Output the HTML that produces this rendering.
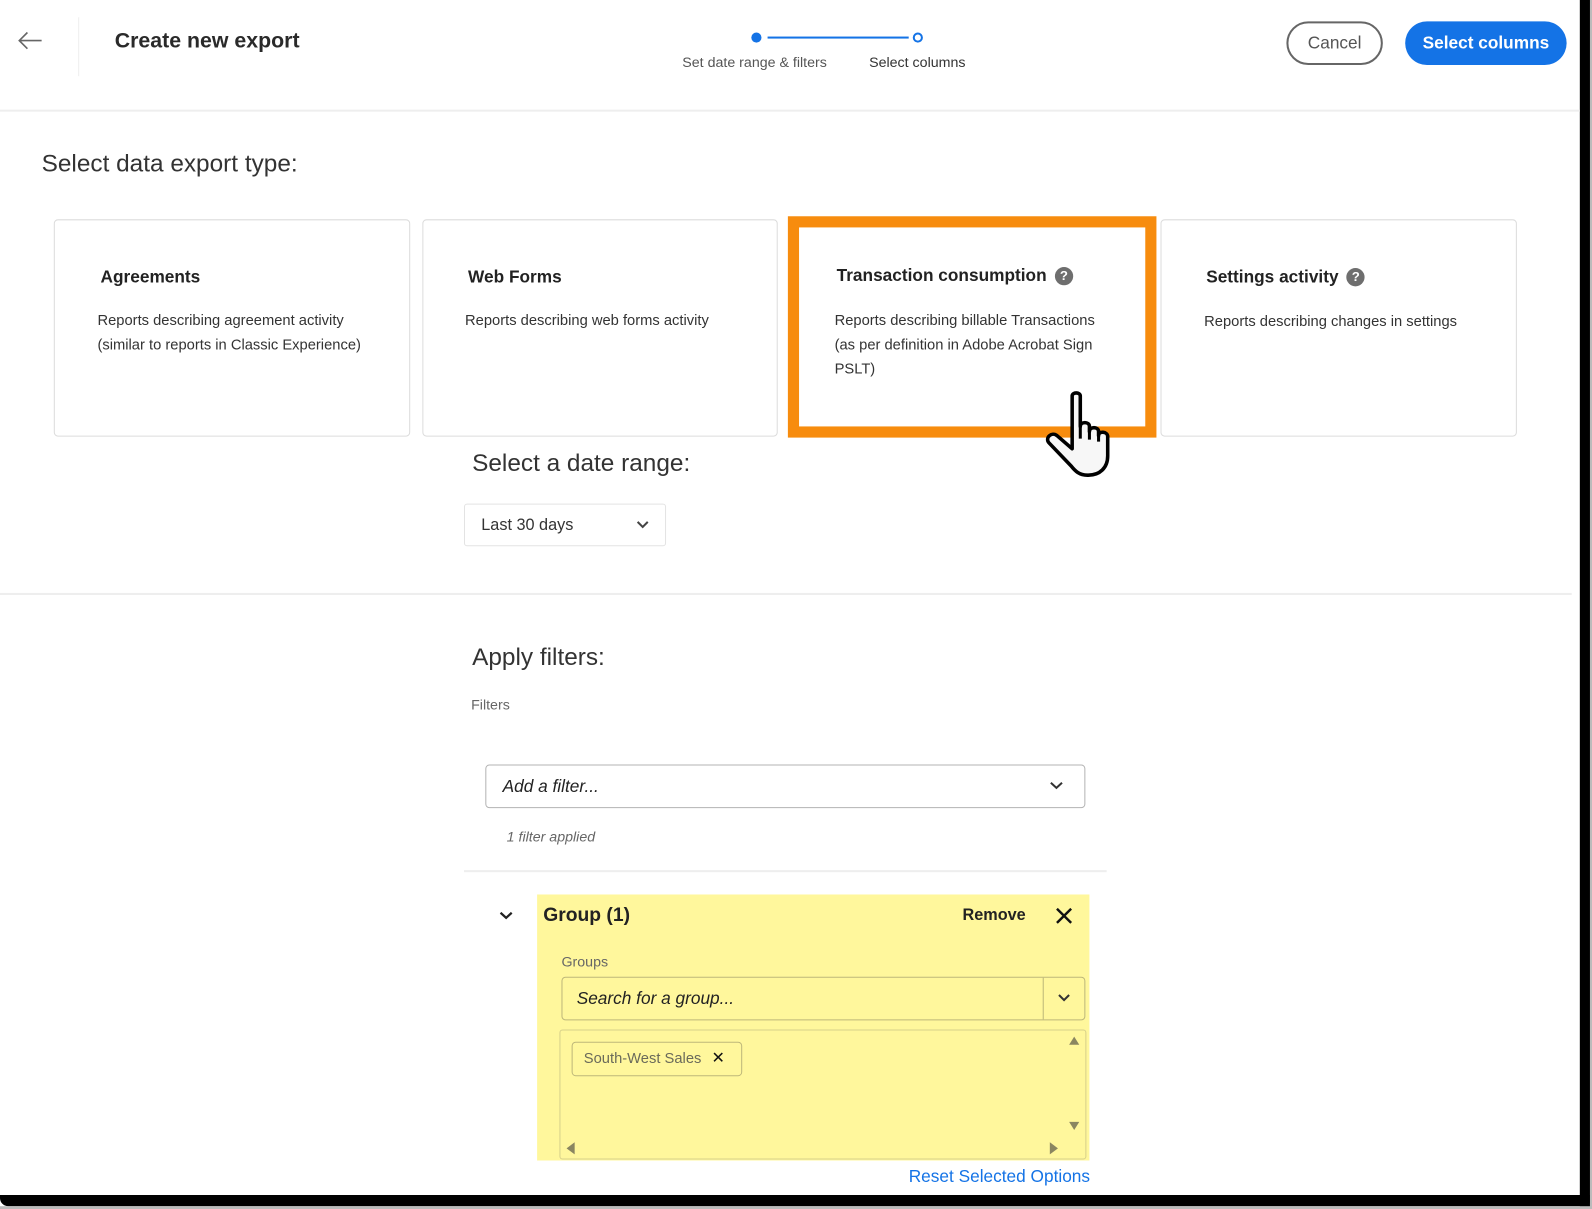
<!DOCTYPE html>
<html><head><meta charset="utf-8"><style>
*{box-sizing:border-box;margin:0;padding:0}
html,body{width:1592px;height:1209px;overflow:hidden;background:#fff;font-family:"Liberation Sans",sans-serif;color:#2c2c2c}
#w{position:absolute;left:0;top:0;width:1568px;height:1191px;transform:scale(1.01531);transform-origin:0 0}
.a{position:absolute}
.card{position:absolute;top:216px;height:214px;border:1px solid #dcdcdc;border-radius:4px;background:#fff}
.card h3{position:absolute;font-size:17px;font-weight:bold;color:#222}
.card p{position:absolute;font-size:14.5px;line-height:24px;color:#333}
.q{display:inline-block;width:18px;height:18px;border-radius:50%;background:#6e6e6e;color:#fff;font-size:13px;text-align:center;line-height:18px;margin-left:8px;vertical-align:1px}
</style></head><body><div id="w">
<!-- frame shadow -->
<div class="a" style="left:1556px;top:0;width:10px;height:1190px;background:#000"></div>
<div class="a" style="left:0;top:1177px;width:1566px;height:11px;background:#000;border-radius:0 0 4px 8px"></div>
<div class="a" style="left:1566px;top:0;width:2px;height:1191px;background:#bbb"></div>
<div class="a" style="left:0;top:1188px;width:1568px;height:3px;background:#bbb"></div>

<!-- header -->
<svg class="a" style="left:16px;top:30px" width="28" height="20"><path d="M25 10H3M11 2L3 10L11 18" stroke="#666" stroke-width="1.6" fill="none"/></svg>
<div class="a" style="left:77px;top:17px;width:1px;height:58px;background:#eee"></div>
<div class="a" style="left:113px;top:29px;font-size:21px;font-weight:bold;color:#2a2a2a">Create new export</div>
<div class="a" style="left:740px;top:32px;width:10px;height:10px;border-radius:50%;background:#1473e6"></div>
<div class="a" style="left:756px;top:36px;width:139px;height:2px;background:#1473e6"></div>
<div class="a" style="left:899px;top:32px;width:10px;height:10px;border-radius:50%;border:2px solid #1473e6"></div>
<div class="a" style="left:672px;top:53px;font-size:14px;color:#555">Set date range &amp; filters</div>
<div class="a" style="left:856px;top:53px;font-size:14px;color:#333">Select columns</div>
<div class="a" style="left:1267px;top:21px;width:95px;height:43px;border:2px solid #666;border-radius:22px;font-size:17px;color:#555;text-align:center;line-height:39px">Cancel</div>
<div class="a" style="left:1384px;top:21px;width:159px;height:43px;background:#1473e6;border-radius:22px;font-size:17px;font-weight:bold;color:#fff;text-align:center;line-height:43px">Select columns</div>
<div class="a" style="left:0;top:108px;width:1556px;height:2px;background:#eee"></div>

<div class="a" style="left:41px;top:148px;font-size:24px;color:#333">Select data export type:</div>

<div class="card" style="left:53px;width:351px"><h3 style="left:45px;top:46px">Agreements</h3><p style="left:42px;top:87px">Reports describing agreement activity<br>(similar to reports in Classic Experience)</p></div>
<div class="card" style="left:416px;width:350px"><h3 style="left:44px;top:46px">Web Forms</h3><p style="left:41px;top:87px">Reports describing web forms activity</p></div>
<div class="a" style="left:776px;top:213px;width:363px;height:218px;border:11px solid #f78c0e;background:#fff"></div>
<div class="a" style="left:824px;top:262px;font-size:17px;font-weight:bold;color:#222">Transaction consumption<span class="q">?</span></div>
<div class="a" style="left:822px;top:304px;font-size:14.5px;line-height:24px;color:#333">Reports describing billable Transactions<br>(as per definition in Adobe Acrobat Sign<br>PSLT)</div>
<div class="card" style="left:1143px;width:351px"><h3 style="left:44px;top:46px">Settings activity<span class="q">?</span></h3><p style="left:42px;top:88px">Reports describing changes in settings</p></div>

<!-- hand cursor -->
<svg class="a" style="left:1026px;top:384px" width="75" height="86" viewBox="0 0 75 86"><path d="M30 6c0-4 8-4 8 0v30c0-5 9-5 9 0v5c0-5 9-5 9 0v4c0-5 9-4 9 1v19c0 12-8 19-19 19H45c-8 0-12-4-16-9L7 52c-4-5 3-11 8-7l15 13z" fill="#f7f7f7" stroke="#000" stroke-width="3.5" stroke-linejoin="round"/><path d="M38 36v12M47 41v8M56 45v6" stroke="#000" stroke-width="3"/></svg>

<div class="a" style="left:465px;top:443px;font-size:24px;color:#333">Select a date range:</div>
<div class="a" style="left:457px;top:496px;width:199px;height:42px;border:1px solid #e3e3e3;border-radius:3px;font-size:16px;color:#333;line-height:42px;padding-left:16px">Last 30 days</div>
<svg class="a" style="left:626px;top:512px" width="14" height="10"><path d="M2 2l5 5 5-5" stroke="#444" stroke-width="2" fill="none"/></svg>
<div class="a" style="left:0;top:584px;width:1548px;height:2px;background:#eee"></div>

<div class="a" style="left:465px;top:634px;font-size:24px;color:#333">Apply filters:</div>
<div class="a" style="left:464px;top:686px;font-size:14px;color:#666">Filters</div>
<div class="a" style="left:478px;top:753px;width:591px;height:43px;border:1px solid #b3b3b3;border-radius:4px;font-size:17px;font-style:italic;color:#222;line-height:42px;padding-left:16px">Add a filter...</div>
<svg class="a" style="left:1033px;top:769px" width="15" height="10"><path d="M2 2l5.5 5 5.5-5" stroke="#333" stroke-width="2" fill="none"/></svg>
<div class="a" style="left:499px;top:816px;font-size:14px;font-style:italic;color:#666">1 filter applied</div>
<div class="a" style="left:457px;top:857px;width:633px;height:2px;background:#eee"></div>

<svg class="a" style="left:491px;top:897px" width="15" height="10"><path d="M2 2l5.5 5 5.5-5" stroke="#222" stroke-width="2.2" fill="none"/></svg>
<div class="a" style="left:529px;top:881px;width:544px;height:262px;background:#fff79c"></div>
<div class="a" style="left:535px;top:891px;font-size:19px;font-weight:bold;color:#222">Group (1)</div>
<div class="a" style="left:948px;top:893px;font-size:16px;font-weight:bold;color:#222">Remove</div>
<svg class="a" style="left:1039px;top:893px" width="18" height="18"><path d="M2 2l14 14M16 2L2 16" stroke="#111" stroke-width="2.4"/></svg>
<div class="a" style="left:553px;top:939px;font-size:14px;color:#666">Groups</div>
<div class="a" style="left:553px;top:962px;width:516px;height:43px;border:1px solid #bdb77a;border-radius:4px;font-size:17px;font-style:italic;color:#222;line-height:42px;padding-left:14px">Search for a group...</div>
<div class="a" style="left:1027px;top:963px;width:1px;height:41px;background:#bdb77a"></div>
<svg class="a" style="left:1041px;top:978px" width="14" height="10"><path d="M2 2l5 5 5-5" stroke="#333" stroke-width="2" fill="none"/></svg>
<div class="a" style="left:551px;top:1014px;width:519px;height:128px;border:1px solid #d7d08a;border-radius:3px"></div>
<div class="a" style="left:563px;top:1026px;width:168px;height:34px;border:1px solid #bdb77a;border-radius:4px;font-size:14.5px;color:#6a6a5a;line-height:32px;padding-left:11px">South-West Sales <span style="color:#111;font-size:16px;margin-left:6px">✕</span></div>
<svg class="a" style="left:1050px;top:1018px" width="16" height="120"><path d="M3 11l5-8 5 8z M3 87l5 8 5-8z" fill="#8a8660"/></svg>
<svg class="a" style="left:556px;top:1122px" width="490" height="18"><path d="M10 3l-8 6 8 6z M478 3l8 6-8 6z" fill="#8a8660"/></svg>
<div class="a" style="left:895px;top:1149px;font-size:17px;color:#1473e6">Reset Selected Options</div>
</div></body></html>
